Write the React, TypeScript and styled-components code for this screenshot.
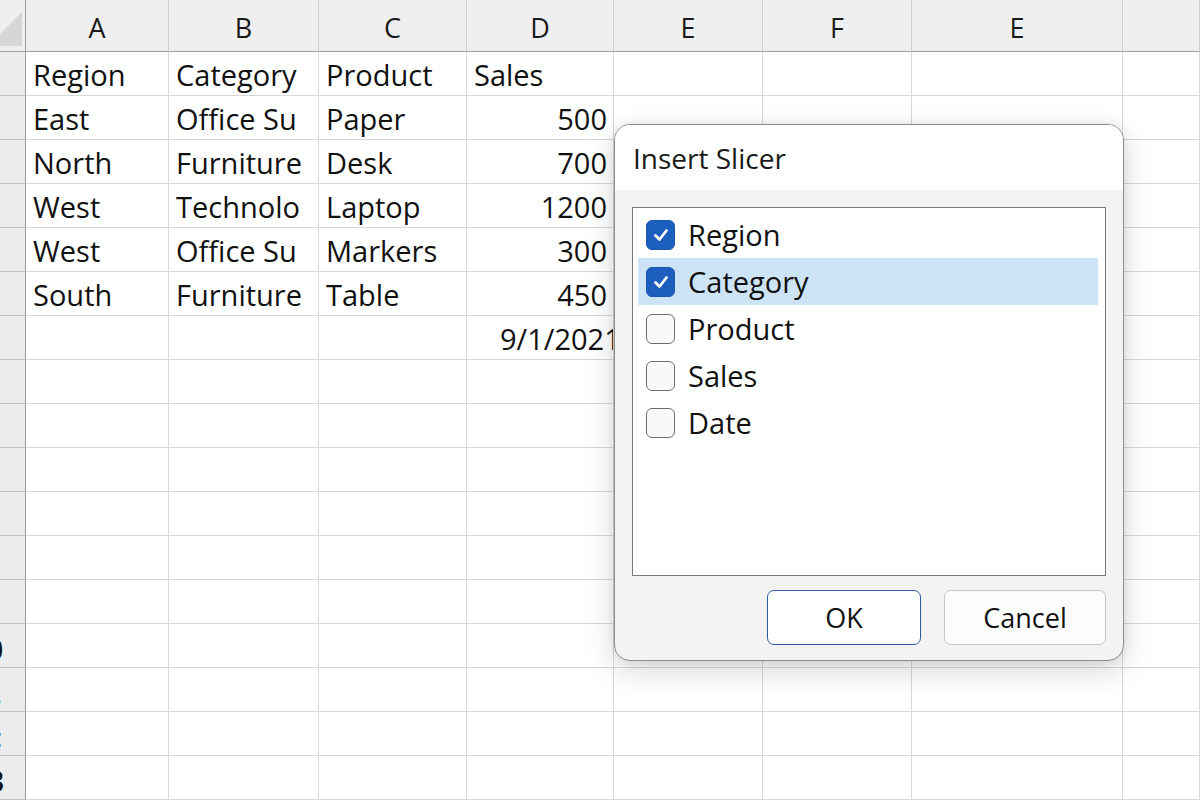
import React from "react";
import styled, { createGlobalStyle } from "styled-components";

const GlobalStyle = createGlobalStyle`
  html, body { margin: 0; padding: 0; background: #ffffff; }
  body { font-family: "Open Sans", "Noto Sans", sans-serif; color: #111; overflow: hidden; }
  * { box-sizing: border-box; }
`;

const Page = styled.div`
  position: relative;
  width: 1200px;
  height: 800px;
  overflow: hidden;
  background: #ffffff;
`;

const Sheet = styled.div`
  display: grid;
  grid-template-columns: 26px 143px 150px 148px 147px 149px 149px 211px 1fr;
  grid-template-rows: 52px repeat(17, 44px);
  width: 1200px;
  background: #ffffff;
`;

const Corner = styled.div`
  background: #efefef;
  border-right: 1px solid #9d9d9d;
  border-bottom: 1px solid #9f9f9f;
  overflow: hidden;
  display: flex;
`;

const ColHeader = styled.div`
  background: #efefef;
  border-right: 1px solid #d2d2d2;
  border-bottom: 1px solid #9f9f9f;
  display: flex;
  align-items: center;
  justify-content: center;
  padding-top: 4px;
  font-size: 27px;
  color: #1a1a1a;
`;

const RowHeader = styled.div`
  background: #ececec;
  border-right: 1px solid #9d9d9d;
  border-bottom: 1px solid #bfbfbf;
  overflow: hidden;
  display: flex;
  align-items: center;
  padding-top: 6px;
  font-size: 28px;
  font-weight: 700;
  color: #111;
`;

const Stub = styled.span<{ $shift: number; $color?: string }>`
  margin-left: ${(p) => p.$shift}px;
  color: ${(p) => p.$color || "#111"};
  white-space: nowrap;
`;

const Cell = styled.div<{ $align?: "left" | "right"; $pad?: number }>`
  border-right: 1px solid #d8d8d8;
  border-bottom: 1px solid #d8d8d8;
  display: flex;
  align-items: center;
  justify-content: ${(p) => (p.$align === "right" ? "flex-end" : "flex-start")};
  padding: 2px ${(p) => (p.$align === "right" ? 6 : 0)}px 0 ${(p) => p.$pad ?? 7}px;
  font-size: 29px;
  white-space: nowrap;
  overflow: hidden;
  color: #111;
`;

const Dialog = styled.div`
  position: absolute;
  left: 614px;
  top: 124px;
  width: 510px;
  height: 537px;
  border: 1px solid #8d8d8d;
  border-radius: 16px;
  background: #f3f3f3;
  box-shadow: 0 10px 30px rgba(0, 0, 0, 0.16), 0 0 10px rgba(0, 0, 0, 0.08);
  overflow: hidden;
  display: flex;
  flex-direction: column;
`;

const TitleBar = styled.div`
  height: 65px;
  background: #ffffff;
  display: flex;
  align-items: center;
  padding: 0 0 0 18px;
  font-size: 28px;
  color: #1a1a1a;
`;

const Body = styled.div`
  padding: 17px 17px 0 17px;
  display: flex;
  flex-direction: column;
`;

const ListBox = styled.div`
  height: 369px;
  background: #ffffff;
  border: 1px solid #7a7a7a;
  padding: 3px 7px 0 5px;
  display: flex;
  flex-direction: column;
`;

const Item = styled.div<{ $selected?: boolean }>`
  height: 47px;
  display: flex;
  align-items: center;
  gap: 13px;
  padding-left: 8px;
  background: ${(p) => (p.$selected ? "#cde3f6" : "transparent")};
  font-size: 29px;
  color: #111;
`;

const Box = styled.div<{ $checked?: boolean }>`
  width: 29px;
  height: 30px;
  border-radius: 6px;
  display: flex;
  align-items: center;
  justify-content: center;
  background: ${(p) => (p.$checked ? "#1c5fbe" : "#f9f9f9")};
  border: ${(p) => (p.$checked ? "1px solid #1a56ad" : "1.5px solid #6f6f6f")};
`;

const Label = styled.span`
  padding-top: 0px;
`;

const Footer = styled.div`
  display: flex;
  justify-content: flex-end;
  gap: 23px;
  padding-top: 14px;
`;

const Button = styled.button<{ $primary?: boolean; $w: number }>`
  width: ${(p) => p.$w}px;
  height: 55px;
  border-radius: 7px;
  font-family: "Open Sans", "Noto Sans", sans-serif;
  font-size: 27px;
  color: #111;
  padding: 0;
  background: ${(p) => (p.$primary ? "#ffffff" : "#fcfcfc")};
  border: ${(p) => (p.$primary ? "1.5px solid #2f5b9c" : "1px solid #c6c6c6")};
`;

const Check = () => (
  <svg width="20" height="20" viewBox="0 0 20 20">
    <polyline points="4.5,10.5 8.5,14.5 15.5,5.5" fill="none" stroke="#fff" strokeWidth="2.8" strokeLinecap="round" strokeLinejoin="round" />
  </svg>
);

const CornerMark = () => (
  <svg width="25" height="51" viewBox="0 0 25 51">
    <polygon points="0,34 22,12 22,46 0,46" fill="#d6d6d6" />
  </svg>
);

type Row = [string, string, string, string];
const data: Row[] = [
  ["Region", "Category", "Product", "Sales"],
  ["East", "Office Su", "Paper", "500"],
  ["North", "Furniture", "Desk", "700"],
  ["West", "Technolo", "Laptop", "1200"],
  ["West", "Office Su", "Markers", "300"],
  ["South", "Furniture", "Table", "450"],
];

const headers = ["A", "B", "C", "D", "E", "F", "E", ""];

const stubs: Record<number, { text: string; shift: number; color?: string }> = {
  14: { text: "10", shift: -29 },
  15: { text: ".", shift: -6, color: "#6f93d6" },
  16: { text: ":", shift: -6 },
  17: { text: "13", shift: -28 },
};

export default function App() {
  const rows = [];
  for (let r = 1; r <= 17; r++) {
    const stub = stubs[r];
    rows.push(
      <RowHeader key={`rh${r}`}>
        {stub ? <Stub $shift={stub.shift} $color={stub.color}>{stub.text}</Stub> : null}
      </RowHeader>
    );
    const rowData = data[r - 1];
    for (let c = 0; c < 8; c++) {
      if (rowData && c < 4) {
        const isNum = r > 1 && c === 3;
        rows.push(
          <Cell key={`c${r}-${c}`} $align={isNum ? "right" : "left"}>
            {rowData[c]}
          </Cell>
        );
      } else if (r === 7 && c === 3) {
        rows.push(
          <Cell key={`c${r}-${c}`} $pad={33}>
            9/1/2021
          </Cell>
        );
      } else {
        rows.push(<Cell key={`c${r}-${c}`} />);
      }
    }
  }

  return (
    <Page>
      <GlobalStyle />
      <Sheet>
        <Corner>
          <CornerMark />
        </Corner>
        {headers.map((h, i) => (
          <ColHeader key={`h${i}`}>{h}</ColHeader>
        ))}
        {rows}
      </Sheet>
      <Dialog>
        <TitleBar>Insert Slicer</TitleBar>
        <Body>
          <ListBox>
            {[
              { label: "Region", checked: true, selected: false },
              { label: "Category", checked: true, selected: true },
              { label: "Product", checked: false, selected: false },
              { label: "Sales", checked: false, selected: false },
              { label: "Date", checked: false, selected: false },
            ].map((it) => (
              <Item key={it.label} $selected={it.selected}>
                <Box $checked={it.checked}>{it.checked ? <Check /> : null}</Box>
                <Label>{it.label}</Label>
              </Item>
            ))}
          </ListBox>
          <Footer>
            <Button $primary $w={154}>OK</Button>
            <Button $w={162}>Cancel</Button>
          </Footer>
        </Body>
      </Dialog>
    </Page>
  );
}
